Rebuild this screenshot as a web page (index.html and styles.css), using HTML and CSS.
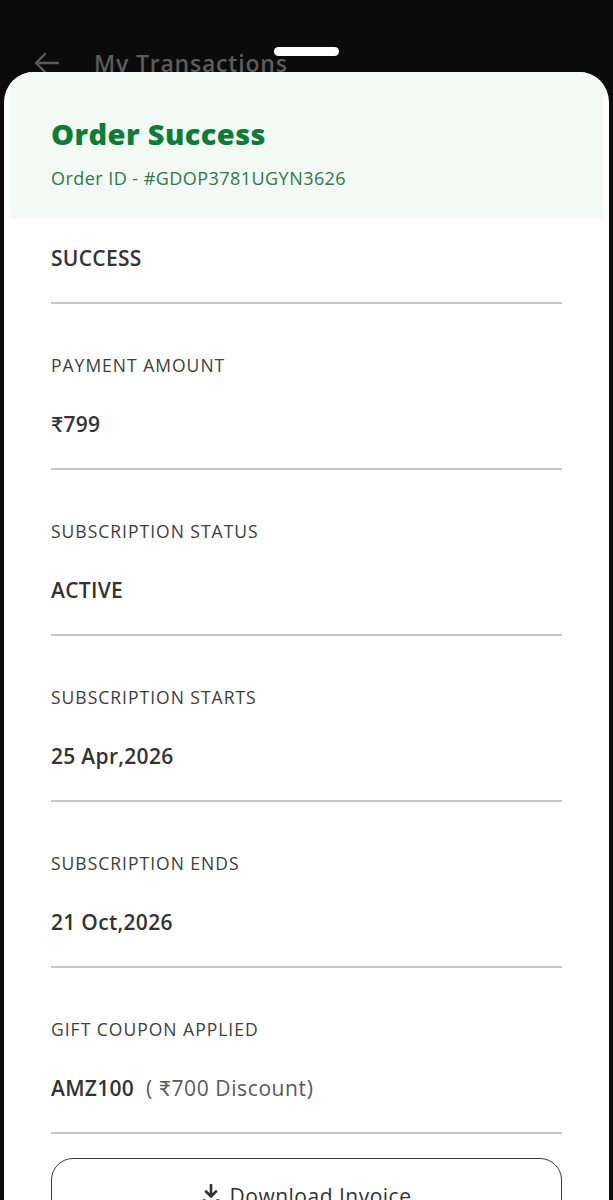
FILE: index.html
```html
<!DOCTYPE html>
<html>
<head>
<meta charset="utf-8">
<link rel="stylesheet" href="styles.css">
</head>
<body>
<div class="screen">
  <div class="appbar">
    <svg class="back" width="26" height="22" viewBox="0 0 26 22"><path d="M25 11H3M12 2L3 11l9 9" fill="none" stroke="#5a5a5a" stroke-width="2.4" stroke-linecap="round" stroke-linejoin="round"/></svg>
    <span class="appbar-title">My Transactions</span>
  </div>
  <div class="handle"></div>
  <div class="sheet">
    <div class="sheet-head">
      <h1 class="title">Order Success</h1>
      <div class="order-id">Order ID - #GDOP3781UGYN3626</div>
    </div>
    <div class="rows">
      <div class="row first">
        <div class="value">SUCCESS</div>
      </div>
      <div class="row">
        <div class="label">PAYMENT AMOUNT</div>
        <div class="value">₹799</div>
      </div>
      <div class="row">
        <div class="label">SUBSCRIPTION STATUS</div>
        <div class="value">ACTIVE</div>
      </div>
      <div class="row">
        <div class="label">SUBSCRIPTION STARTS</div>
        <div class="value">25 Apr,2026</div>
      </div>
      <div class="row">
        <div class="label">SUBSCRIPTION ENDS</div>
        <div class="value">21 Oct,2026</div>
      </div>
      <div class="row">
        <div class="label">GIFT COUPON APPLIED</div>
        <div class="value">AMZ100 <span class="discount">( ₹700 Discount)</span></div>
      </div>
      <div class="btn">
        <svg class="dl" width="18" height="18" viewBox="0 0 18 18"><path d="M9 1v11M4 7.5l5 5 5-5" fill="none" stroke="#333" stroke-width="2.6" stroke-linecap="round" stroke-linejoin="round"/><path d="M1.5 16.5h1.5M15 16.5h1.5" stroke="#333" stroke-width="2.4" stroke-linecap="round"/></svg>
        <span>Download Invoice</span>
      </div>
    </div>
  </div>
</div>
</body>
</html>
```

FILE: styles.css
```css
* { box-sizing: border-box; }
html, body { margin: 0; padding: 0; }
body {
  background: #0b0b0b;
  font-family: "Open Sans", Lato, sans-serif;
  width: 613px;
  height: 1200px;
  overflow: hidden;
}
.screen {
  position: relative;
  height: 1200px;
  padding-top: 72px;
}
.appbar {
  position: absolute;
  top: 48px;
  left: 33px;
  display: flex;
  align-items: center;
  gap: 35px;
}
.appbar-title {
  color: #5c5c5c;
  font-size: 23px;
  font-weight: 600;
  line-height: 30px;
  letter-spacing: 0.8px;
}
.handle {
  position: absolute;
  top: 47px;
  left: 274px;
  width: 65px;
  height: 9px;
  border-radius: 5px;
  background: #fff;
}
.sheet {
  position: relative;
  margin: 0 4px;
  background: #fff;
  border-radius: 30px 30px 0 0;
  height: 1128px;
  overflow: hidden;
}
.sheet-head {
  background: #f3faf6;
  margin: 0 6px;
  padding: 44px 41px 28px;
}
.title {
  margin: 0;
  color: #0b7d34;
  font-size: 29px;
  font-weight: 800;
  line-height: 36px;
  letter-spacing: 0.4px;
}
.order-id {
  margin-top: 14px;
  color: #2b7a46;
  font-size: 18px;
  line-height: 24px;
  letter-spacing: 0.45px;
}
.rows {
  padding: 0 47px;
}
.row {
  padding: 49px 0 30px;
  border-bottom: 2px solid #c6c6c6;
}
.row.first {
  padding-top: 26px;
}
.label {
  color: #3e3e3e;
  font-size: 17.5px;
  line-height: 24px;
  letter-spacing: 1px;
  margin-bottom: 33px;
}
.value {
  color: #333;
  font-size: 21px;
  font-weight: 600;
  line-height: 28px;
  letter-spacing: 0.3px;
}
.discount {
  color: #5a5a5a;
  font-weight: 400;
  letter-spacing: 0.6px;
  margin-left: 6px;
}
.btn {
  margin-top: 24px;
  height: 72px;
  border: 1.5px solid #3a3a3a;
  border-radius: 22px;
  display: flex;
  justify-content: center;
  align-items: center;
  gap: 10px;
  color: #333;
  font-size: 21px;
  letter-spacing: 0.5px;
  padding-top: 4px;
}
.dl { margin-top: -6px; }
```
